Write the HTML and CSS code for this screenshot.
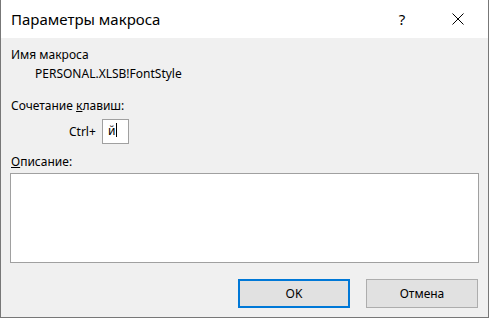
FILE: index.html
```html
<!DOCTYPE html>
<html lang="ru">
<head>
  <meta charset="UTF-8">
  <title>Параметры макроса</title>
  <link rel="stylesheet" href="styles.css">
</head>
<body>
  <div class="dialog">
    <div class="titlebar">
      <span class="title">Параметры макроса</span>
      <span class="help">?</span>
      <span class="close">
        <svg width="12" height="12" viewBox="0 0 12 12"><path d="M0.5 0.5 L11.5 11.5 M11.5 0.5 L0.5 11.5" stroke="#000" stroke-width="1" fill="none"/></svg>
      </span>
    </div>
    <div class="content">
      <div class="label">Имя макроса</div>
      <div class="macro-name">PERSONAL.XLSB!FontStyle</div>
      <div class="label shortcut-label">Сочетание <u>к</u>лавиш:</div>
      <div class="shortcut">
        <span class="ctrl">Ctrl+</span>
        <div class="key-box">й<span class="caret"></span></div>
      </div>
      <div class="label desc-label"><u>О</u>писание:</div>
      <div class="desc-box"></div>
      <div class="buttons">
        <button class="btn btn-default">OK</button>
        <button class="btn">Отмена</button>
      </div>
    </div>
  </div>
</body>
</html>
```
FILE: styles.css
```css
html, body { margin: 0; padding: 0; }
body { width: 489px; height: 318px; overflow: hidden; font-family: "Noto Sans", sans-serif; color: #000; }
.dialog { box-sizing: border-box; width: 489px; height: 318px; border: 1px solid #777; border-top: none; background-color: #f0f0f0; display: flex; flex-direction: column; }
.titlebar { height: 38px; background-color: #fff; display: flex; align-items: center; }
.title { font-size: 15px; margin-left: 10px; flex: 1; padding-bottom: 1px; }
.help { font-size: 15px; width: 24px; margin-right: 38px; text-align: center; }
.close { width: 12px; height: 12px; margin-right: 24px; display: flex; }
.content { flex: 1; padding: 9px 9px 0 9px; font-size: 12px; line-height: 16px; }
.label { margin-left: 1px; }
.macro-name { margin-left: 25px; margin-top: 3px; }
.shortcut-label { margin-top: 16px; }
.shortcut { display: flex; align-items: center; margin-top: 5px; }
.ctrl { margin-left: 59px; width: 33px; }
.key-box { box-sizing: border-box; width: 27px; height: 25px; background-color: #fff; border: 1px solid #a0a0a0; padding: 3px 0 0 5px; font-size: 12px; display: flex; align-items: flex-start; }
.caret { display: inline-block; width: 1px; height: 14px; background-color: #000; margin-left: 1px; }
.desc-label { margin-top: 10px; }
.desc-box { box-sizing: border-box; width: 469px; height: 90px; margin-top: 3px; background-color: #fff; border: 1px solid #a0a0a0; }
.buttons { display: flex; justify-content: flex-end; gap: 16px; margin-top: 16px; margin-right: 1px; }
.btn { box-sizing: border-box; width: 112px; height: 29px; font-family: "Noto Sans", sans-serif; font-size: 12px; color: #000; background-color: #e1e1e1; border: 1px solid #adadad; padding: 0; }
.btn-default { border: 2px solid #0078d7; }
```
